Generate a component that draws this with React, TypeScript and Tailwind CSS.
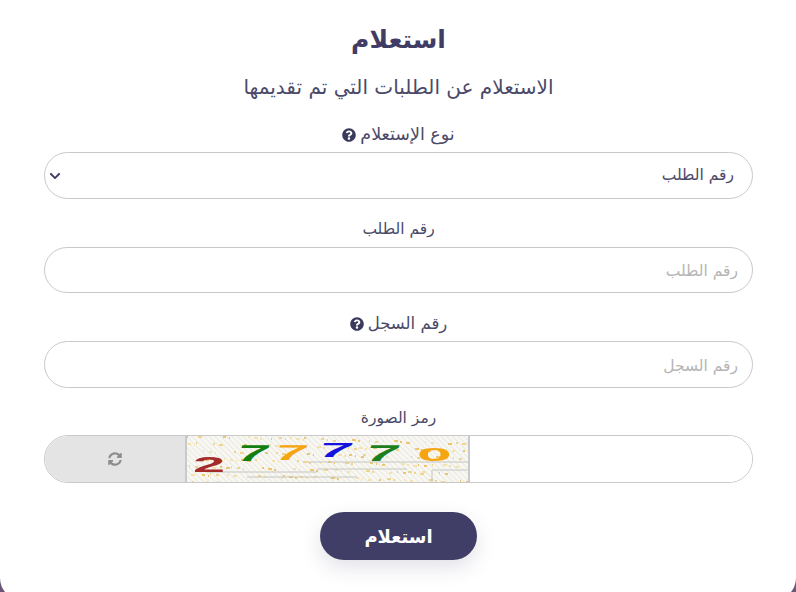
import { FaQuestionCircle, FaChevronDown, FaSyncAlt } from "react-icons/fa";

const specks = Array.from({ length: 190 }, (_, i) => ({
  x: (i * 73) % 285,
  y: (i * 37 + (i % 7) * 11) % 46,
  w: 1 + (i % 4),
  c: i % 3 === 0 ? "#ecc56e" : i % 3 === 1 ? "#f4e2ae" : "#f0d48e",
}));

const digits = [
  { t: "2", x: 6, y: 17, c: "#a52a2a", s: "scale(2.4,0.95)" },
  { t: "7", x: 54, y: 6, c: "#118011", s: "scale(2.4,0.95) skewX(-8deg)" },
  { t: "7", x: 92, y: 6, c: "#f5a511", s: "scale(2.4,0.9) skewX(-8deg)" },
  { t: "7", x: 136, y: 4, c: "#1313dd", s: "scale(2.5,0.85) skewX(-8deg)" },
  { t: "7", x: 183, y: 6, c: "#1d7f1d", s: "scale(2.5,0.95) skewX(-8deg)" },
  { t: "0", x: 230, y: 9, c: "#f5a511", s: "scale(2.6,0.8)" },
];

function FieldLabel({ text, hint, className = "text-[15.5px]" }: { text: string; hint?: boolean; className?: string }) {
  return (
    <label className={`flex h-[18px] items-center justify-center gap-1 pt-[2px] leading-none text-[#4a4a68] ${className}`}>
      <span>{text}</span>
      {hint && <FaQuestionCircle size={14} className="text-[#3a3a5c]" />}
    </label>
  );
}

function TextField({ placeholder, className = "h-[47px]" }: { placeholder: string; className?: string }) {
  return (
    <input
      placeholder={placeholder}
      className={`w-full rounded-[24px] border border-[#c9c9c9] bg-white px-[14px] pt-[2px] text-[15.5px] text-[#3f3d65] outline-none placeholder:text-[#b5b5b5] ${className}`}
    />
  );
}

function Captcha() {
  return (
    <div className="relative h-full w-[285px] shrink-0 overflow-hidden border-x-2 border-[#c9c9c9] bg-[#f8f7f1]" dir="ltr">
      <svg width="285" height="46" className="absolute inset-0 blur-[0.5px]">
        <defs>
          <pattern id="hatch" width="4" height="4" patternUnits="userSpaceOnUse" patternTransform="rotate(45)">
            <path d="M0 0H4" stroke="#dcdcd6" />
          </pattern>
        </defs>
        <rect width="285" height="46" fill="url(#hatch)" />
        {specks.map((p, i) => (
          <rect key={i} x={p.x} y={p.y} width={p.w} height="2" fill={p.c} />
        ))}
        <path d="M20 36H130M120 26H284M60 41H170M130 33H220M245 46V34H284" stroke="#c6c6c0" fill="none" />
      </svg>
      {digits.map((d, i) => (
        <span
          key={i}
          className="absolute origin-top-left font-['Liberation_Sans',sans-serif] text-[24px] leading-none font-bold"
          style={{ left: d.x, top: d.y, color: d.c, transform: d.s }}
        >
          {d.t}
        </span>
      ))}
    </div>
  );
}

export default function App() {
  return (
    <div className="h-[592px] w-[796px] overflow-hidden bg-[#6b5577]">
      <div
        dir="rtl"
        className="flex h-[600px] flex-col rounded-b-[22px] bg-white pr-[43px] pl-[44px] text-center font-['DejaVu_Sans','Noto_Sans',sans-serif]"
      >
        <h1 className="mt-[24px] h-[32px] text-[25px] leading-[32px] font-bold text-[#3f3d65]">استعلام</h1>
        <p className="mt-[16px] h-[30px] text-[20px] leading-[30px] text-[#4a4a68]">
          الاستعلام عن الطلبات التي تم تقديمها
        </p>
        <div className="mt-[23px]">
          <FieldLabel text="نوع الإستعلام" hint className="text-[17.5px]" />
        </div>
        <div className="relative mt-[9px]">
          <select className="h-[47px] w-full appearance-none rounded-[24px] border border-[#c9c9c9] bg-white px-[18px] text-[15.5px] text-[#4a4a68] outline-none">
            <option>رقم الطلب</option>
          </select>
          <FaChevronDown size={12} className="pointer-events-none absolute top-[18px] left-[5px] text-[#3f3d65]" />
        </div>
        <div className="mt-[21px]">
          <FieldLabel text="رقم الطلب" />
        </div>
        <div className="mt-[9px]">
          <TextField placeholder="رقم الطلب" className="h-[46px]" />
        </div>
        <div className="mt-[21px]">
          <FieldLabel text="رقم السجل" hint className="text-[16.5px]" />
        </div>
        <div className="mt-[9px]">
          <TextField placeholder="رقم السجل" />
        </div>
        <div className="mt-[21px]">
          <FieldLabel text="رمز الصورة" />
        </div>
        <div className="mt-[8px] flex h-[48px] overflow-hidden rounded-[24px] border border-[#c9c9c9]">
          <input className="min-w-0 flex-1 bg-white px-[14px] outline-none" />
          <Captcha />
          <button className="flex w-[140px] shrink-0 items-center justify-center bg-[#e4e4e4] text-[#8e8e8e]">
            <FaSyncAlt size={14} />
          </button>
        </div>
        <button className="mx-auto mt-[29px] h-[48px] w-[157px] rounded-[25px] bg-[#403d66] text-[18px] font-bold text-white shadow-[0_8px_20px_rgba(64,61,102,0.15)]">
          استعلام
        </button>
      </div>
    </div>
  );
}
